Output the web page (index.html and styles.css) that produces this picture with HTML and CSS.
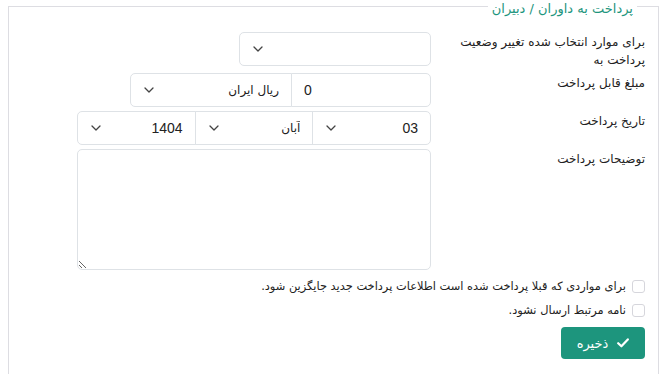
FILE: index.html
```html
<!DOCTYPE html>
<html lang="fa" dir="rtl">
<head>
  <meta charset="UTF-8">
  <title>پرداخت به داوران / دبیران</title>
  <link rel="stylesheet" href="styles.css">
</head>
<body>
  <fieldset class="panel">
    <legend>پرداخت به داوران / دبیران</legend>

    <div class="row">
      <label class="label">برای موارد انتخاب شده تغییر وضعیت پرداخت به</label>
      <div class="control">
        <select class="select status">
          <option></option>
        </select>
      </div>
    </div>

    <div class="row">
      <label class="label">مبلغ قابل پرداخت</label>
      <div class="control">
        <div class="group amount">
          <input class="field num" type="text" value="0">
          <select class="select">
            <option>ریال ایران</option>
          </select>
        </div>
      </div>
    </div>

    <div class="row">
      <label class="label">تاریخ پرداخت</label>
      <div class="control">
        <div class="group date">
          <select class="select num"><option>03</option></select>
          <select class="select"><option>آبان</option></select>
          <select class="select num"><option>1404</option></select>
        </div>
      </div>
    </div>

    <div class="row">
      <label class="label">توضیحات پرداخت</label>
      <div class="control">
        <textarea class="field notes"></textarea>
      </div>
    </div>

    <div class="checks">
      <label class="check"><input type="checkbox"> برای مواردی که قبلا پرداخت شده است اطلاعات پرداخت جدید جایگزین شود.</label>
      <label class="check"><input type="checkbox"> نامه مرتبط ارسال نشود.</label>
    </div>

    <button class="btn" type="button">
      <svg width="12" height="10" viewBox="0 0 12 10"><path d="M1.2 5.2 L4.4 8.3 L10.8 1.4" fill="none" stroke="#fff" stroke-width="2.2" stroke-linecap="round" stroke-linejoin="round"/></svg>
      ذخیره
    </button>
  </fieldset>
</body>
</html>
```

FILE: styles.css
```css
html {
  background: #fff;
}

body {
  margin: 0;
  font-family: "DejaVu Sans", sans-serif;
  font-size: 12px;
  color: #222;
}

.panel {
  margin: 0 3px 0 8px;
  padding: 20px 13px 60px 13px;
  border: 1px solid #dddde2;
  border-bottom: 0;
}

/* text sits a bit below the border line, as in the original */
.panel legend {
  position: relative;
  top: 3px;
  margin-right: 8px;
  padding: 0 4px;
  font-size: 13px;
  line-height: 12px;
  color: #1d957d;
}

.row {
  display: grid;
  grid-template-columns: 200px 354px;
  column-gap: 14px;
  margin-bottom: 4px;
}

.label {
  padding-top: 1px;
  line-height: 18px;
}

.field,
.select {
  box-sizing: border-box;
  height: 34px;
  margin: 0;
  border: 1px solid #dee2e6;
  border-radius: 5px;
  background-color: #fff;
  font-family: "DejaVu Sans", sans-serif;
  font-size: 12px;
  color: #222;
}

.select {
  appearance: none;
  padding: 0 12px 0 30px;
  background-image: url("data:image/svg+xml,%3csvg xmlns='http://www.w3.org/2000/svg' viewBox='0 0 10 6'%3e%3cpath d='M1 1l4 4 4-4' fill='none' stroke='%23444' stroke-width='1.3' stroke-linecap='round' stroke-linejoin='round'/%3e%3c/svg%3e");
  background-repeat: no-repeat;
  background-position: left 13px center;
  background-size: 10px 6px;
}

.num {
  font-family: "Liberation Sans", sans-serif;
  font-size: 14px;
}

.status {
  width: 192px;
}

.group {
  display: flex;
}

.group > * {
  border-radius: 0;
}

.group > :first-child {
  border-radius: 0 5px 5px 0;
}

.group > :last-child {
  border-radius: 5px 0 0 5px;
  margin-right: -1px;
}

.group > :not(:first-child):not(:last-child) {
  margin-right: -1px;
}

.amount {
  width: 301px;
}

.amount .field {
  width: 140px;
  padding: 0 12px;
  direction: ltr;
  text-align: left;
}

.amount .select {
  width: 162px;
}

.date .select {
  width: 119px;
}

.notes {
  display: block;
  width: 354px;
  height: 121px;
  padding: 6px 12px;
  resize: both;
}

.checks {
  margin-top: 3px;
}

.check {
  display: flex;
  align-items: center;
  gap: 6px;
  font-size: 11.4px;
  line-height: 24px;
}

.check input {
  appearance: none;
  width: 13px;
  height: 13px;
  margin: 0;
  border: 1px solid #d6d6dc;
  border-radius: 3px;
}

.btn {
  display: flex;
  align-items: center;
  justify-content: center;
  gap: 9px;
  width: 84px;
  height: 32px;
  margin-top: 5px;
  border: 0;
  border-radius: 4px;
  background: #1d957d;
  color: #fff;
  font-family: "DejaVu Sans", sans-serif;
  font-size: 13px;
}
```
